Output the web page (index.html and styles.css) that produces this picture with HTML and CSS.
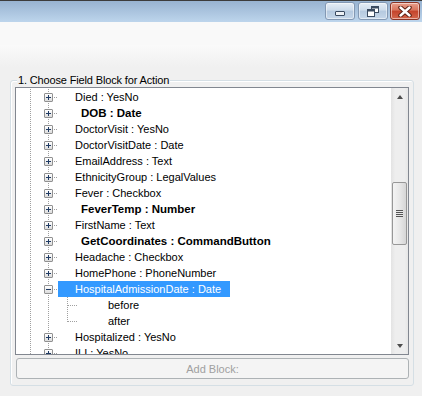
FILE: index.html
```html
<!DOCTYPE html>
<html lang="en">
<head>
    <meta charset="UTF-8">
    <meta name="viewport" content="width=device-width, initial-scale=1.0">
    <title>Field Block Action</title>
    <link rel="stylesheet" href="styles.css">
</head>
<body>
    <div class="titlebar">
        <div class="caption-buttons">
            <div class="cap-btn min">
                <svg width="10" height="5" viewBox="0 0 10 5"><rect x="0.5" y="0.5" width="9" height="4" rx="0.5" fill="#eef1f5" stroke="#3a4a60"/></svg>
            </div>
            <div class="cap-btn">
                <svg width="12" height="11" viewBox="0 0 12 11">
                    <rect x="4.5" y="0.5" width="7" height="6" fill="#fff" stroke="#3a4a60"/>
                    <rect x="5" y="1" width="6" height="1.5" fill="#3a4a60"/>
                    <rect x="0.5" y="3.5" width="7" height="7" fill="#fff" stroke="#3a4a60"/>
                    <rect x="1" y="4" width="6" height="1.5" fill="#3a4a60"/>
                </svg>
            </div>
            <div class="cap-btn close">
                <svg width="14" height="11" viewBox="0 0 14 11">
                    <path d="M2.5 1.5 L11.5 9.5 M11.5 1.5 L2.5 9.5" stroke="#5a1d10" stroke-width="4.4" stroke-linecap="round"/>
                    <path d="M2.5 1.5 L11.5 9.5 M11.5 1.5 L2.5 9.5" stroke="#fff" stroke-width="2.4" stroke-linecap="round"/>
                </svg>
            </div>
        </div>
    </div>
    <div class="toolstrip"></div>
    <div class="content">
        <div class="groupbox">
            <span class="group-title">1. Choose Field Block for Action</span>
            <div class="tree">
                <div class="tree-rows">
                    <div class="node"><span class="exp"></span><span class="dots"></span><span class="label">Died : YesNo</span></div>
                    <div class="node"><span class="exp"></span><span class="dots"></span><span class="label bold">DOB : Date</span></div>
                    <div class="node"><span class="exp"></span><span class="dots"></span><span class="label">DoctorVisit : YesNo</span></div>
                    <div class="node"><span class="exp"></span><span class="dots"></span><span class="label">DoctorVisitDate : Date</span></div>
                    <div class="node"><span class="exp"></span><span class="dots"></span><span class="label">EmailAddress : Text</span></div>
                    <div class="node"><span class="exp"></span><span class="dots"></span><span class="label">EthnicityGroup : LegalValues</span></div>
                    <div class="node"><span class="exp"></span><span class="dots"></span><span class="label">Fever : Checkbox</span></div>
                    <div class="node"><span class="exp"></span><span class="dots"></span><span class="label bold">FeverTemp : Number</span></div>
                    <div class="node"><span class="exp"></span><span class="dots"></span><span class="label">FirstName : Text</span></div>
                    <div class="node"><span class="exp"></span><span class="dots"></span><span class="label bold">GetCoordinates : CommandButton</span></div>
                    <div class="node"><span class="exp"></span><span class="dots"></span><span class="label">Headache : Checkbox</span></div>
                    <div class="node"><span class="exp"></span><span class="dots"></span><span class="label">HomePhone : PhoneNumber</span></div>
                    <div class="node"><span class="exp open"></span><span class="dots"></span><span class="label selected">HospitalAdmissionDate : Date</span></div>
                    <div class="node child"><span class="elbow"></span><span class="label">before</span></div>
                    <div class="node child"><span class="elbow last"></span><span class="label">after</span></div>
                    <div class="node"><span class="exp"></span><span class="dots"></span><span class="label">Hospitalized : YesNo</span></div>
                    <div class="node"><span class="exp"></span><span class="dots"></span><span class="label">ILI : YesNo</span></div>
                </div>
                <div class="vscroll">
                    <div class="sb-btn"><span class="arrow up"></span></div>
                    <div class="sb-track"><div class="sb-thumb"><span class="grip"></span></div></div>
                    <div class="sb-btn"><span class="arrow down"></span></div>
                </div>
            </div>
            <button class="add-block" disabled>Add Block:</button>
        </div>
    </div>
</body>
</html>
```

FILE: styles.css
```css
body {
    margin: 0;
    width: 422px;
    height: 396px;
    overflow: hidden;
    background: #f0f0f0;
    font-family: "Liberation Sans", Arial, sans-serif;
    font-size: 11px;
    color: #000;
}

/* window chrome */
.titlebar {
    height: 21px;
    border-top: 1px solid #3c3c3c;
    background: linear-gradient(#98b3d1, #bdd5ec);
    display: flex;
    justify-content: flex-end;
}
.caption-buttons {
    display: flex;
    gap: 3px;
    padding: 1px 2px 0 0;
}
.cap-btn {
    width: 28px;
    height: 16px;
    border: 1px solid #8398b3;
    border-radius: 3px;
    background: linear-gradient(#e6edf6, #cddbeb 45%, #b5c9df 50%, #c6d7ea);
    display: flex;
    align-items: center;
    justify-content: center;
    box-shadow: inset 0 0 0 1px rgba(255, 255, 255, 0.5);
}
.cap-btn.min svg {
    margin-top: 5px;
}
.cap-btn.close {
    margin-left: -1px;
    border-color: #8b3424;
    background: linear-gradient(#e9a08d, #d6735b 45%, #c4432a 50%, #d3664b);
}
.toolstrip {
    height: 23px;
    background: #f9f9f9;
}
.content {
    height: 351px;
    padding: 35px 0 0 10px;
    box-sizing: border-box;
    background: linear-gradient(#fafafa, #f0f0f0 22px);
}

/* group box */
.groupbox {
    position: relative;
    width: 404px;
    height: 306px;
    border: 1px solid #d5dfe5;
    border-radius: 3px;
    box-shadow: inset 1px 1px 0 #fff;
    padding: 6px 0 0 4px;
    box-sizing: border-box;
}
.group-title {
    position: absolute;
    top: -7px;
    left: 6px;
    padding: 0 1px;
    background: #f0f0f0;
    line-height: 13px;
    letter-spacing: -0.15px;
}

/* tree view */
.tree {
    width: 394px;
    height: 268px;
    box-sizing: border-box;
    border: 1px solid #828790;
    background: #fff;
    display: flex;
}
.tree-rows {
    flex: 1;
    overflow: hidden;
    padding-top: 1px;
    background:
        linear-gradient(#a0a0a0 50%, transparent 50%) 14px 1px / 1px 2px repeat-y,
        linear-gradient(#a0a0a0 50%, transparent 50%) 32px 1px / 1px 2px repeat-y,
        #fff;
}
.node {
    height: 16px;
    display: flex;
    align-items: flex-start;
    padding-left: 28px;
    white-space: nowrap;
}
.exp {
    width: 9px;
    height: 9px;
    box-sizing: border-box;
    margin-top: 4px;
    border: 1px solid #919191;
    border-radius: 1px;
    background:
        linear-gradient(#1f3a63, #1f3a63) 1px 3px / 5px 1px no-repeat,
        linear-gradient(#1f3a63, #1f3a63) 3px 1px / 1px 5px no-repeat,
        linear-gradient(#fff, #dcdcdc);
}
.exp.open {
    background:
        linear-gradient(#1f3a63, #1f3a63) 1px 3px / 5px 1px no-repeat,
        linear-gradient(#fff, #dcdcdc);
}
.dots {
    width: 3px;
    height: 1px;
    margin: 8px 0 0 1px;
    background: linear-gradient(to right, #a0a0a0 50%, transparent 50%) 0 0 / 2px 1px repeat-x;
}
.label {
    margin-left: 1px;
    padding: 0 3px 0 17px;
    height: 16px;
    line-height: 16px;
}
.label.bold {
    font-weight: bold;
    font-size: 11.5px;
    padding-left: 23px;
}
.label.selected {
    background: #3399ff;
    color: #fff;
    padding-right: 9px;
}
.node.child {
    padding-left: 51px;
}
.elbow {
    width: 10px;
    height: 16px;
    background:
        linear-gradient(to right, #a0a0a0 50%, transparent 50%) 1px 8px / 2px 1px repeat-x,
        linear-gradient(#a0a0a0 50%, transparent 50%) 0 0 / 1px 2px repeat-y;
}
.elbow.last {
    background:
        linear-gradient(to right, #a0a0a0 50%, transparent 50%) 1px 8px / 2px 1px repeat-x,
        linear-gradient(#a0a0a0 50%, transparent 50%) 0 0 / 1px 2px repeat-y;
    -webkit-mask: linear-gradient(#000, #000) 0 0 / 10px 9px no-repeat;
    mask: linear-gradient(#000, #000) 0 0 / 10px 9px no-repeat;
}
.node.child .label {
    padding-left: 31px;
    margin-left: 0;
}

/* scrollbar */
.vscroll {
    width: 17px;
    display: flex;
    flex-direction: column;
    background: linear-gradient(to right, #e3e3e3, #eeeeee 25%, #eeeeee 80%, #e6e6e6);
}
.sb-btn {
    height: 17px;
    display: flex;
    align-items: center;
    justify-content: center;
}
.arrow {
    width: 0;
    height: 0;
    border-left: 3.5px solid transparent;
    border-right: 3.5px solid transparent;
}
.arrow.up {
    border-bottom: 4px solid #4d4d4d;
}
.arrow.down {
    border-top: 4px solid #4d4d4d;
}
.sb-track {
    flex: 1;
}
.sb-thumb {
    margin: 77px 1px 0 1px;
    height: 63px;
    box-sizing: border-box;
    border: 1px solid #979797;
    border-radius: 2px;
    background: linear-gradient(to right, #f4f4f4, #e8e8e8 50%, #d6d6d6);
    display: flex;
    align-items: center;
    justify-content: center;
}
.grip {
    width: 7px;
    height: 7px;
    background: repeating-linear-gradient(#555 0, #555 1px, #e8e8e8 1px, #e8e8e8 2px);
}

/* button */
.add-block {
    display: block;
    margin: 3px 0 0 1px;
    width: 393px;
    height: 21px;
    border: 1px solid #adb2b5;
    border-radius: 3px;
    background: #f4f4f4;
    font-family: "Liberation Sans", Arial, sans-serif;
    font-size: 11px;
    color: #a0a0a0;
    padding: 0;
}
```
